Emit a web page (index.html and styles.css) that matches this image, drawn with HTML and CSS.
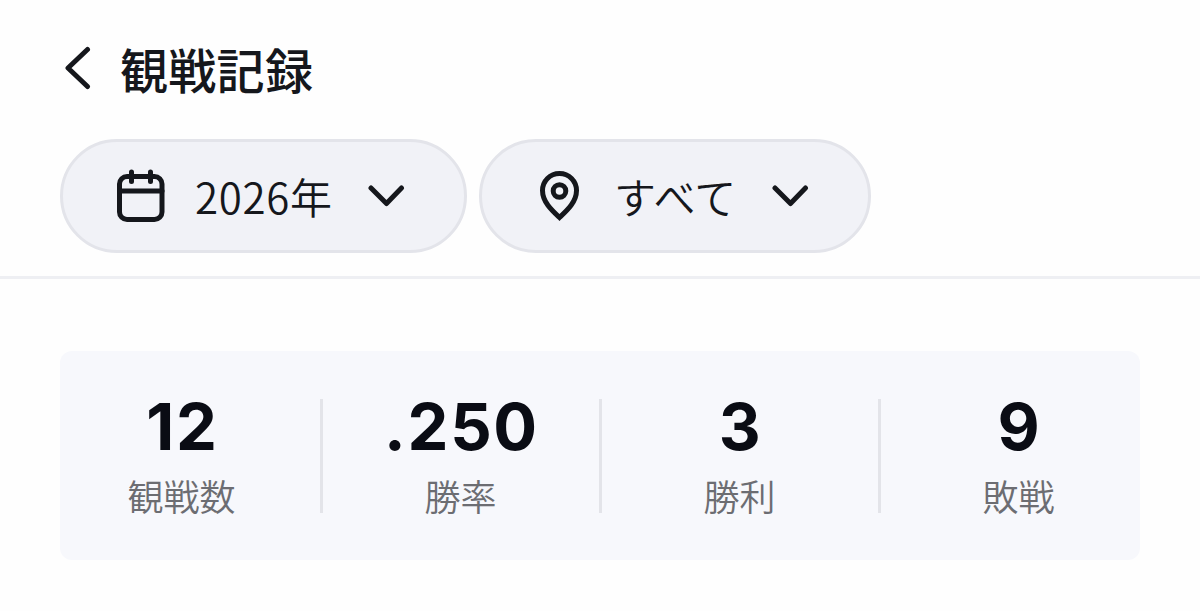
FILE: index.html
```html
<!DOCTYPE html>
<html lang="ja">
<head>
<meta charset="utf-8">
<title>観戦記録</title>
<link rel="stylesheet" href="styles.css">
</head>
<body>
<header class="header">
  <div class="title-row">
    <svg class="back" viewBox="0 0 34 44" aria-hidden="true"><path d="M27.500 3.500 8 22l19.500 18.500"/></svg>
    <h1 class="title">観戦記録</h1>
  </div>
  <div class="filters">
    <button class="pill pill-year">
      <svg class="icon calendar" viewBox="0 0 50 54" aria-hidden="true"><rect x="3.500" y="7.500" width="42.500" height="43" rx="7.500"/><path d="M3.500 22h42.500M15.500 3v9.500M34.500 3v9.500"/></svg>
      <span class="label">2026年</span>
      <svg class="chevron" viewBox="0 0 38 22" aria-hidden="true"><path d="m3 3 15.500 15.500L33.500 3"/></svg>
    </button>
    <button class="pill pill-place">
      <svg class="icon pin" viewBox="0 0 42 52" aria-hidden="true"><path class="sharp" d="M20.500 3.500C11 3.500 3.500 11 3.500 20.500c0 11.500 9.500 20 17 27 7.500-7 17-15.500 17-27C37.500 11 30 3.500 20.500 3.500Z"/><circle cx="20.500" cy="21" r="6.300"/></svg>
      <span class="label">すべて</span>
      <svg class="chevron" viewBox="0 0 38 22" aria-hidden="true"><path d="m3 3 15.500 15.500L33.500 3"/></svg>
    </button>
  </div>
</header>
<main class="content">
  <section class="stats">
    <div class="stat"><strong class="value">12</strong><span class="name">観戦数</span></div>
    <div class="divider"></div>
    <div class="stat"><strong class="value">.250</strong><span class="name">勝率</span></div>
    <div class="divider"></div>
    <div class="stat"><strong class="value">3</strong><span class="name">勝利</span></div>
    <div class="divider"></div>
    <div class="stat"><strong class="value">9</strong><span class="name">敗戦</span></div>
  </section>
</main>
</body>
</html>
```
FILE: styles.css
```css
* { box-sizing: border-box; }
body { margin: 0; background: #fefefe; color: #15171c; font-family: "Noto Sans CJK JP", sans-serif; }
svg { flex: none; fill: none; stroke: currentColor; stroke-width: 5; stroke-linecap: round; stroke-linejoin: round; }
.header { height: 279px; padding: 33px 60px 0; border-bottom: 3px solid #eeeff3; }
.title-row { display: flex; align-items: center; height: 70px; }
.back { width: 34px; height: 44px; margin: 0 26px 0 0; }
.title { margin: 0; font-size: 48px; line-height: 70px; font-weight: 500; letter-spacing: 0.3px; }
.filters { display: flex; gap: 12px; margin-top: 36px; }
.pill { display: flex; align-items: center; height: 114px; padding: 0; border: 3px solid #e3e4ea; border-radius: 57px; background: #f1f2f7; color: inherit; font: inherit; }
.pill-year { width: 407px; padding-left: 53px; }
.pill-place { width: 392px; padding-left: 57px; }
.calendar { width: 50px; height: 54px; }
.pin { width: 42px; height: 52px; }
.sharp { stroke-linejoin: miter; }
.label { font-family: "Noto Sans CJK JP DemiLight", "Noto Sans CJK JP", sans-serif; font-size: 42px; line-height: 58px; font-weight: 350; letter-spacing: 0.4px; text-align: left; white-space: nowrap; }
.pill-year .label { width: 138px; margin-left: 29px; letter-spacing: 0.7px; }
.pill-place .label { width: 123px; margin-left: 33px; }
.chevron { width: 38px; height: 22px; margin-left: 35px; }
.content { padding: 72px 60px 0; }
.stats { display: flex; gap: 16.5px; height: 209px; padding: 48px 0 0; border-radius: 12px; background: #f7f8fc; }
.stat { flex: 1 1 0; display: flex; flex-direction: column; align-items: center; height: 114px; }
.divider { flex: none; width: 3px; height: 114px; background: #e3e4e9; }
.value { padding-left: 2px; font-family: Inter, sans-serif; font-size: 65px; line-height: 56px; font-weight: 700; letter-spacing: 1.7px; color: #0a0c14; }
.name { margin-top: 14px; font-family: "Noto Sans CJK JP DemiLight", "Noto Sans CJK JP", sans-serif; font-size: 36px; line-height: 52px; font-weight: 350; color: #6c6d72; }
```
